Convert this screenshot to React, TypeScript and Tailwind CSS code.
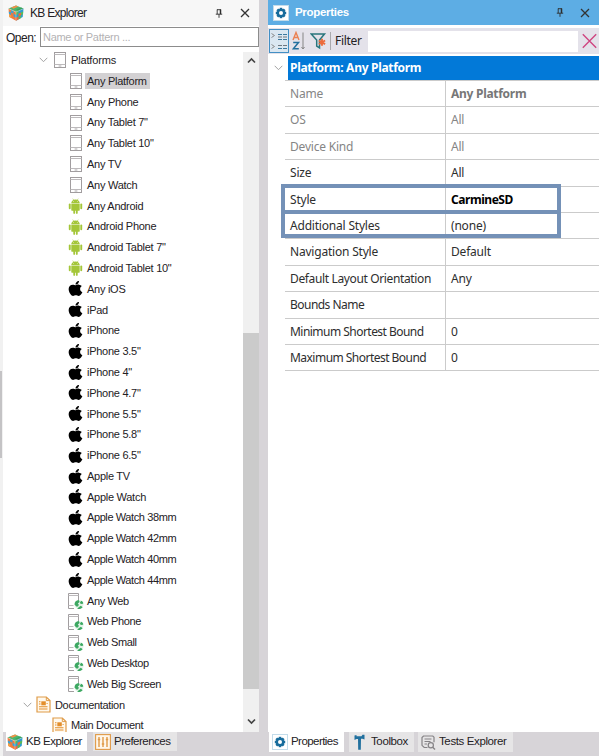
import React from "react";
import { FaApple } from "react-icons/fa";

const PhoneIcon = () => (
  <svg width="14" height="18" viewBox="0 0 14 18" fill="none" className="shrink-0">
    <rect x="1.5" y="1.500" width="11" height="15" fill="#fff" stroke="#a19d9f" />
    <path d="M1.5 3.5H12.500M1.5 13.5H12.500" stroke="#bdbabc" />
    <path d="M5.6 15H8.4" stroke="#aaa7a9" strokeWidth="1" />
  </svg>
);

const AndroidIcon = () => (
  <svg width="15" height="16" viewBox="0 0 15 16" className="shrink-0" fill="#a4c639">
    <path d="M3.3 5.1C3.4 3.6 4.3 2.6 5.3 2L4.5.7l.4-.2.8 1.3a5 5 0 0 1 3.6 0L10.1.5l.4.2L9.7 2c1 .6 1.9 1.6 2 3.1z" />
    <path d="M3.3 5.6h8.4v6.3c0 .6-.4.9-.9.9H9.7v2.1a.9.9 0 0 1-1.8 0v-2.1h-.8v2.1a.9.9 0 0 1-1.8 0v-2.1H4.2c-.5 0-.9-.3-.9-.9z" />
    <rect x="0.8" y="5.6" width="1.9" height="5.7" rx="0.95" />
    <rect x="12.3" y="5.6" width="1.9" height="5.7" rx="0.95" />
    <circle cx="5.6" cy="3.6" r="0.45" fill="#fff" />
    <circle cx="9.4" cy="3.6" r="0.45" fill="#fff" />
  </svg>
);

const WebIcon = () => (
  <svg width="17" height="18" viewBox="0 0 17 18" fill="none" className="shrink-0">
    <path d="M7 16.500H1.500V1.500h10v7" stroke="#a19d9f" />
    <path d="M1.500 3.500h10M1.500 13.500h5" stroke="#bdbabc" />
    <circle cx="12" cy="12.600" r="4.500" fill="#e3f4e8" />
    <path d="M11.800 8.100c-2.500.1-4.300 2-4.300 4.300l1.800 2.200 1.700-.2.900-1.700-1.100-1.200 1.900-1.500zM14.300 8.700l-1.300 1.600.4 1.500 1.800.3 1.200-.9c-.3-1.100-1-2-2.100-2.500zM12 15l-1.800 1.700c1.900.8 4.200.2 5.400-1.500l-1.700-1.500z" fill="#3da862" />
  </svg>
);

const DocIcon = () => (
  <svg width="15" height="17" viewBox="0 0 15 17" fill="none" className="shrink-0">
    <path d="M1 1h9.300l3.700 3.600V16H1z" fill="#fff9ee" stroke="#df9b48" strokeWidth="1.2" />
    <path d="M10.300 1v3.600H14" stroke="#df9b48" />
    <rect x="5.300" y="5.300" width="4.500" height="4" fill="#e38e2b" />
    <path d="M3 5.800h1.500M3 8h1.500M3 10.700h8.500M3 13h8.500M10.600 7.500h1" stroke="#e38e2b" strokeWidth="1.100" />
  </svg>
);

const CubeIcon = () => (
  <svg width="16" height="16" viewBox="0 0 16 16" className="shrink-0">
    <path d="M8 .5 15.500 3.600 8 7 .5 3.600z" fill="#4bb56f" />
    <path d="M8 .5 10.500 1.500 5.500 3.700 3 2.600z" fill="#f0914a" />
    <path d="M10.500 3.700 13 2.600l2.500 1L10.500 5.900 8 4.800z" fill="#37a35f" />
    <path d="M.5 3.600 8 7v8.700L1.300 12z" fill="#f07b3c" />
    <path d="M3 4.700 5.500 5.900v2.800L3.100 7.500zM1 9.100 .8 6.400l2.300 1.100v2.700zM5.500 8.700 8 9.900v2.900L5.600 11.600z" fill="#3aa3d6" />
    <path d="M1 9.100l2.200 1.200V13L1.300 12z" fill="#f5a040" />
    <path d="M15.500 3.600 8 7v8.700L14.700 12z" fill="#2f9ccd" />
    <path d="M8 7l2.500-1.100v2.800L8 9.900zM13 7.500l2.200-1.100-.2 2.900-2.100 1zM10.500 11.600 13 10.300V13l-2.500 1.400z" fill="#5bba58" />
    <path d="M10.500 8.700 13 7.500v2.800l-2.500 1.300zM8 12.800l2.500-1.200v2.800L8 15.700z" fill="#f0693c" />
    <path d="M.5 3.600 8 7l7.500-3.400M8 7v8.700" stroke="#f6eedf" strokeWidth="0.400" fill="none" />
  </svg>
);

const GearIcon = () => (
  <svg width="16" height="16" viewBox="0 0 16 16" className="shrink-0">
    <rect x="0.500" y="0.500" width="15" height="15" fill="#fff" stroke="#c3dcea" />
    <g fill="#176c9c">
      <circle cx="8" cy="8" r="4.300" />
      <rect x="6.700" y="2.800" width="2.600" height="10.400" />
      <rect x="2.800" y="6.700" width="10.400" height="2.600" />
      <rect x="6.700" y="2.800" width="2.600" height="10.400" transform="rotate(45 8 8)" />
      <rect x="6.700" y="2.800" width="2.600" height="10.400" transform="rotate(-45 8 8)" />
    </g>
    <circle cx="8" cy="8" r="2" fill="#fff" />
  </svg>
);

const PinIcon = () => (
  <svg width="8" height="9" viewBox="0 0 8 9" fill="none" stroke="#2d2d2d" className="shrink-0">
    <path d="M2 .7h4M2.200.5v4.600M.8 5.200h6.400M4 5.200v3.600" strokeWidth="0.900" />
    <path d="M5.500.5v4.600" strokeWidth="1.500" />
  </svg>
);

const CloseIcon = () => (
  <svg width="10" height="10" viewBox="0 0 10 10" stroke="#333" strokeWidth="1.300" className="shrink-0">
    <path d="M1 1l8 8M9 1L1 9" />
  </svg>
);

const Chevron = () => (
  <svg width="9" height="6" viewBox="0 0 9 6" fill="none" stroke="#a3a3a3" className="shrink-0">
    <path d="M.7.8 4.500 4.700 8.300.8" />
  </svg>
);

const ScrollArrow = ({ up }: { up?: boolean }) => (
  <svg width="9" height="7" viewBox="0 0 9 7" fill="none" stroke="#444" strokeWidth="1.700">
    <path d={up ? "M1 5.500 4.500 2 8 5.500" : "M1 1.500 4.500 5 8 1.500"} />
  </svg>
);

type Kind = "phone" | "android" | "apple" | "web";
const items: [string, Kind][] = [
  ["Any Platform", "phone"],
  ["Any Phone", "phone"],
  ['Any Tablet 7"', "phone"],
  ['Any Tablet 10"', "phone"],
  ["Any TV", "phone"],
  ["Any Watch", "phone"],
  ["Any Android", "android"],
  ["Android Phone", "android"],
  ['Android Tablet 7"', "android"],
  ['Android Tablet 10"', "android"],
  ["Any iOS", "apple"],
  ["iPad", "apple"],
  ["iPhone", "apple"],
  ['iPhone 3.5"', "apple"],
  ['iPhone 4"', "apple"],
  ['iPhone 4.7"', "apple"],
  ['iPhone 5.5"', "apple"],
  ['iPhone 5.8"', "apple"],
  ['iPhone 6.5"', "apple"],
  ["Apple TV", "apple"],
  ["Apple Watch", "apple"],
  ["Apple Watch 38mm", "apple"],
  ["Apple Watch 42mm", "apple"],
  ["Apple Watch 40mm", "apple"],
  ["Apple Watch 44mm", "apple"],
  ["Any Web", "web"],
  ["Web Phone", "web"],
  ["Web Small", "web"],
  ["Web Desktop", "web"],
  ["Web Big Screen", "web"],
];

const icons: Record<Kind, React.ReactNode> = {
  phone: <PhoneIcon />,
  android: <AndroidIcon />,
  apple: <FaApple size={17} color="#000" className="shrink-0 scale-x-110" />,
  web: <WebIcon />,
};

const rows: { label: string; value: string; tone?: "muted"; bold?: boolean; tight?: boolean }[] = [
  { label: "Name", value: "Any Platform", tone: "muted", bold: true },
  { label: "OS", value: "All", tone: "muted" },
  { label: "Device Kind", value: "All", tone: "muted" },
  { label: "Size", value: "All" },
  { label: "Style", value: "CarmineSD", bold: true },
  { label: "Additional Styles", value: "(none)" },
  { label: "Navigation Style", value: "Default" },
  { label: "Default Layout Orientation", value: "Any" },
  { label: "Bounds Name", value: "", tight: true },
  { label: "Minimum Shortest Bound", value: "0", tight: true },
  { label: "Maximum Shortest Bound", value: "0", tight: true },
];

function Explorer() {
  return (
    <section className="flex w-[256px] flex-col">
      <header className="flex h-[26px] shrink-0 items-center bg-[#f7f7f7] pl-[5px] pr-[9px]">
        <CubeIcon />
        <span className="ml-[6px] flex-1 text-[12px] tracking-[-0.7px]">KB Explorer</span>
        <PinIcon />
        <span className="ml-[17px] flex">
          <CloseIcon />
        </span>
      </header>
      <div className="flex h-[26px] shrink-0 items-start bg-white pt-px">
        <span className="w-[35px] shrink-0 pl-[3px] pt-[2px] text-[12px] leading-[18px] tracking-[-0.5px]">Open:</span>
        <div className="ml-[2px] h-[20px] flex-1 border border-[#8c8c8c] pl-[2px] text-[11px] leading-[18px] tracking-[-0.3px] text-[#b4b2b4]">
          Name or Pattern ...
        </div>
      </div>
      <div className="flex h-[680px] shrink-0 bg-white">
        <div className="h-[680px] flex-1 overflow-hidden text-[11px] tracking-[-0.270px]">
          <div className="-mt-[2.200px] flex h-[20.800px] items-center pl-[36px]">
            <Chevron />
            <span className="ml-[5px] flex">
              <PhoneIcon />
            </span>
            <span className="ml-[4px] tracking-[-0.150px]">Platforms</span>
          </div>
          {items.map(([name, kind], i) => (
            <div key={name} className="flex h-[20.800px] items-center pl-[63px]">
              <span className="flex w-[19px] justify-center">{icons[kind]}</span>
              <span
                className={
                  i === 0
                    ? "h-[16px] bg-[#d3d1d3] pl-[2px] pr-[3px] leading-[16px]"
                    : name.endsWith("mm")
                      ? "pl-[2px] tracking-[-0.400px]"
                      : kind === "web"
                        ? "pl-[2px] tracking-[-0.370px]"
                        : "pl-[2px]"
                }
              >
                {name}
              </span>
            </div>
          ))}
          <div className="flex h-[20.800px] items-center pl-[20px]">
            <Chevron />
            <span className="ml-[4px] flex">
              <DocIcon />
            </span>
            <span className="ml-[4px] tracking-[-0.330px]">Documentation</span>
          </div>
          <div className="flex h-[20.800px] items-center pl-[49px]">
            <DocIcon />
            <span className="ml-[4px] tracking-[-0.370px]">Main Document</span>
          </div>
        </div>
        <div className="flex w-[16px] flex-col bg-[#f0f0f0]">
          <div className="flex h-[17px] items-center justify-center">
            <ScrollArrow up />
          </div>
          <div className="mt-[264px] h-[356px] bg-[#cbcbcb]" />
          <div className="mt-auto flex h-[22px] items-center justify-center">
            <ScrollArrow />
          </div>
        </div>
      </div>
      <footer className="flex h-[24px] items-start bg-[#d7d4d8] pl-[3px] text-[11.500px] tracking-[-0.500px]">
        <div className="flex h-[19px] w-[81px] items-center bg-white pl-px">
          <CubeIcon />
          <span className="ml-[3px] whitespace-nowrap">KB Explorer</span>
        </div>
        <div className="ml-[6px] flex h-[19px] w-[84px] items-center bg-[#e6e5e6] pl-[2px]">
          <svg width="16" height="16" viewBox="0 0 16 16" fill="none" stroke="#e09a48" className="shrink-0">
            <rect x="0.600" y="0.600" width="14.800" height="14.800" fill="#fff7eb" strokeWidth="1.100" />
            <path d="M4 3v10M8 3v10M12 3v10M2.800 5.500h2.400M6.800 10h2.400M10.800 5.500h2.400" strokeWidth="1.400" />
          </svg>
          <span className="ml-[3px]">Preferences</span>
        </div>
      </footer>
    </section>
  );
}

function Toolbar() {
  return (
    <div className="mt-[3px] flex h-[26px] shrink-0 items-center bg-[#e4e2ea] pl-px">
      <div className="flex h-[24px] w-[20px] shrink-0 items-center justify-center border border-[#438fc4] bg-[#dbe7f1]">
        <svg width="18" height="20" viewBox="0 0 18 20" fill="none">
          <path d="M1.500 2.500l3 2-3 2M1.500 13.500l3 2-3 2" stroke="#8b8b8b" />
          <path d="M8 3.500h4M13 3.500h4M8 8.500h4M13 8.500h4M8 17.500h4M13 17.500h4" stroke="#3c789d" strokeWidth="1.200" />
          <path d="M8 6h4M13 6h4M8 14.500h4M13 14.500h4" stroke="#6f777f" strokeWidth="1.200" />
        </svg>
      </div>
      <svg width="14" height="20" viewBox="0 0 14 20" className="ml-[3px] shrink-0" fill="none">
        <path d="M1 9l3-7.500L7 9M2 6.500h4" stroke="#eb8052" strokeWidth="1.400" />
        <path d="M1.200 11.500h5.300l-5.100 6.300h5.400" stroke="#226f9e" strokeWidth="1.500" />
        <path d="M11 1.500v16M9.500 16l1.500 2 1.500-2" stroke="#858585" />
      </svg>
      <svg width="17" height="18" viewBox="0 0 17 18" className="ml-[4px] shrink-0" fill="none">
        <path d="M1.200 2h13.300L9.500 8v8l-2.800-1.800V8z" stroke="#28757c" strokeWidth="1.500" />
        <path d="M12 6.800v7M8.900 8.500l6.200 3.600M15.100 8.500l-6.200 3.600" stroke="#ec6b3c" strokeWidth="1.900" />
      </svg>
      <div className="ml-[3px] h-[18px] w-px bg-[#a9a9ad]" />
      <span className="ml-[4px] w-[33px] font-['Noto_Sans',sans-serif] text-[12px] tracking-[-0.300px]">Filter</span>
      <div className="h-[21px] w-[210px] bg-white" />
      <svg width="15" height="16" viewBox="0 0 15 16" className="ml-[4px] shrink-0" stroke="#cf4580" strokeWidth="1.400">
        <path d="M.8 1.300l13.400 13.400M14.200 1.300.8 14.700" />
      </svg>
    </div>
  );
}

function Properties() {
  return (
    <section className="flex w-[331px] flex-col bg-white">
      <header className="flex h-[25px] shrink-0 items-center bg-[#5dade4] pl-[5px] pr-[9px]">
        <GearIcon />
        <span className="ml-[6px] flex-1 text-[11.500px] font-bold tracking-[-0.300px] text-white">Properties</span>
        <PinIcon />
        <span className="ml-[16px] flex">
          <CloseIcon />
        </span>
      </header>
      <Toolbar />
      <div className="relative mt-px h-[677px] shrink-0 pt-px font-['Noto_Sans',sans-serif] text-[12px]">
        <div className="flex h-[24px] items-center">
          <span className="flex w-[20px] justify-center">
            <Chevron />
          </span>
          <div className="flex h-[24px] flex-1 items-center bg-[#0279d8] pl-[2px] font-bold tracking-[-0.300px] text-white">
            Platform: Any Platform
          </div>
        </div>
        <div className="ml-[17px] border-t border-[#cbcbcb]">
          {rows.map((r) => (
            <div
              key={r.label}
              className={`flex h-[26.400px] items-stretch border-b border-[#cbcbcb] leading-[26.500px] ${r.tone ? "text-[#858585]" : "text-[#2e2e2e]"}`}
            >
              <span
                className={`w-[161px] shrink-0 whitespace-nowrap border-r border-[#cbcbcb] pl-[5px] ${r.tight ? "tracking-[-0.530px]" : r.label.length > 20 ? "tracking-[-0.360px]" : "tracking-[-0.200px]"}`}
              >
                {r.label}
              </span>
              <span
                className={
                  r.bold
                    ? r.tone
                      ? "pl-[5px] font-bold tracking-[-0.280px] text-[#777]"
                      : "pl-[5px] font-bold tracking-[-0.450px] text-black"
                    : "pl-[5px] tracking-[-0.200px]"
                }
              >
                {r.value}
              </span>
            </div>
          ))}
        </div>
        <div className="absolute left-[13px] top-[129px] h-[30px] w-[280px] border-4 border-[#7491b7]" />
        <div className="absolute left-[13px] top-[155px] h-[28px] w-[280px] border-4 border-[#7491b7]" />
      </div>
      <footer className="flex h-[24px] items-start bg-[#d7d4d8] pl-px text-[11.500px] tracking-[-0.380px]">
        <div className="flex h-[20px] w-[75px] items-center bg-white pl-[3px]">
          <GearIcon />
          <span className="ml-[3px] tracking-[-0.550px]">Properties</span>
        </div>
        <div className="ml-[5px] flex h-[20px] w-[65px] items-center bg-[#e6e5e6] pl-[5px]">
          <svg width="11" height="17" viewBox="0 0 11 17" fill="#21709e" className="shrink-0">
            <path d="M.5 1.500 2.500 1v1.200h5L8.500.8h2v4.800l-2-.9H7l-.2 11H4.200L4 5H2.500L.5 6z" />
          </svg>
          <span className="ml-[6px]">Toolbox</span>
        </div>
        <div className="ml-[4px] flex h-[20px] w-[95px] items-center bg-[#e6e5e6] pl-[3px]">
          <svg width="15" height="15" viewBox="0 0 15 15" fill="none" stroke="#858386" className="shrink-0">
            <path d="M6.500 12.500H3.200L1 10.300V2.500L2.500 1h9.300L13 2.200v5" strokeWidth="1.200" />
            <path d="M3.500 4h7M3.500 6.500h6M3.500 9h2.500" strokeWidth="1.100" />
            <circle cx="9.800" cy="10.300" r="2.600" strokeWidth="1.200" />
            <path d="M11.700 12.200l2.300 2.200" strokeWidth="1.400" />
          </svg>
          <span className="ml-[3px] whitespace-nowrap">Tests Explorer</span>
        </div>
      </footer>
    </section>
  );
}

export default function App() {
  return (
    <main className="flex h-[756px] w-[599px] overflow-hidden bg-[#d7d4d8] font-['Liberation_Sans',Arial,sans-serif] text-[#242124]">
      <div className="w-[3px] bg-[#f1f1f1] pt-[371px]">
        <div className="h-[87px] w-[2px] bg-[#c4c3c5]" />
      </div>
      <Explorer />
      <div className="w-[9px] shrink-0" />
      <Properties />
    </main>
  );
}
